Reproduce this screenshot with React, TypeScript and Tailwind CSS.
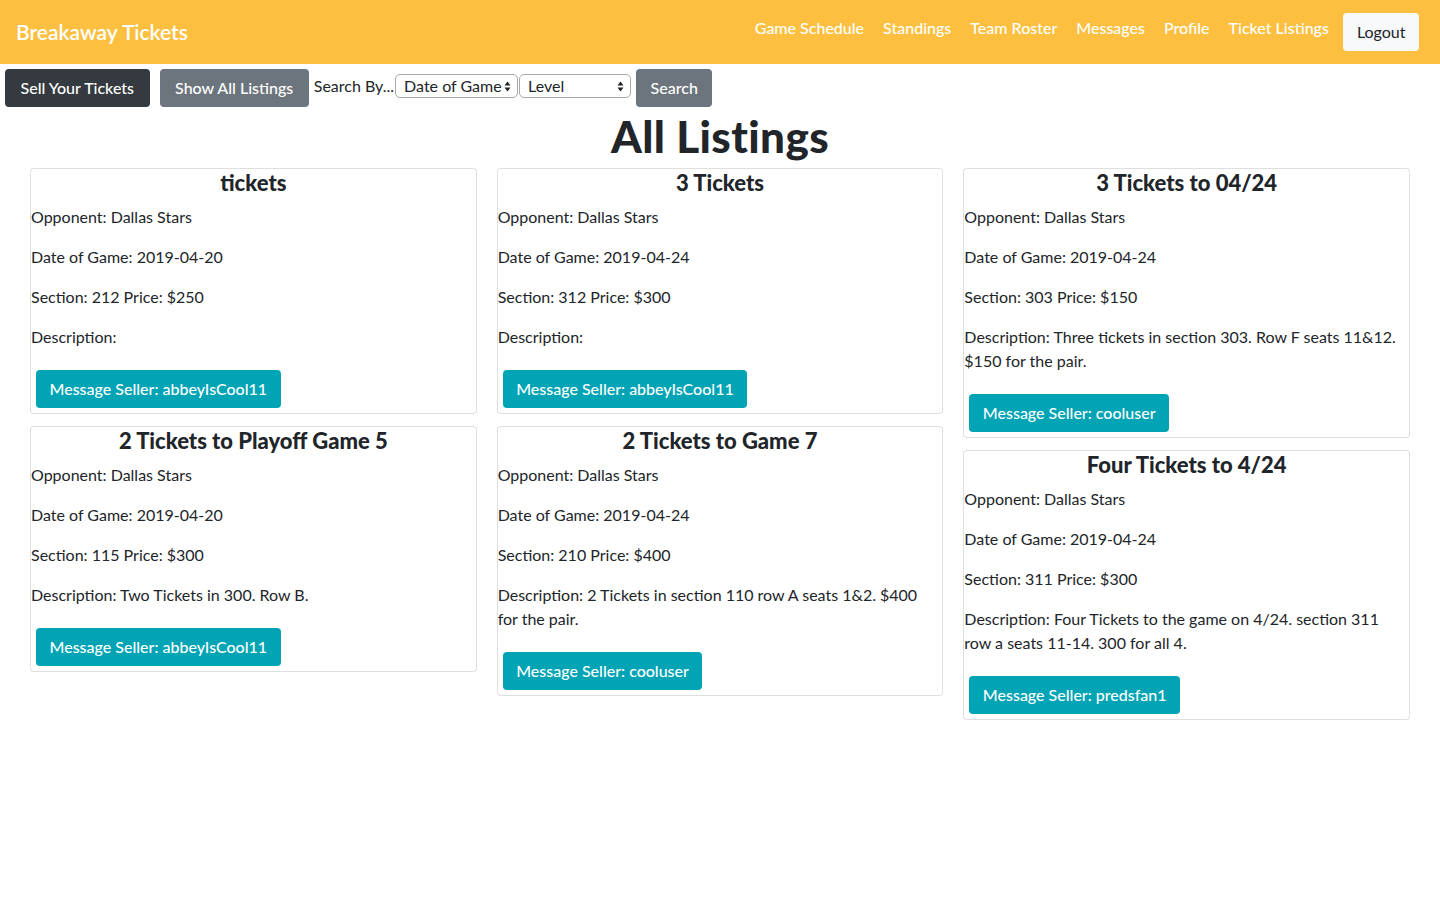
import React from "react";

type Listing = {
  title: string;
  date: string;
  section: string;
  price: string;
  description: string;
  seller: string;
};

// three columns, same order as on the page
const columns: Listing[][] = [
  [
    { title: "tickets", date: "2019-04-20", section: "212", price: "$250", description: "", seller: "abbeyIsCool11" },
    { title: "2 Tickets to Playoff Game 5", date: "2019-04-20", section: "115", price: "$300", description: "Two Tickets in 300. Row B.", seller: "abbeyIsCool11" },
  ],
  [
    { title: "3 Tickets", date: "2019-04-24", section: "312", price: "$300", description: "", seller: "abbeyIsCool11" },
    { title: "2 Tickets to Game 7", date: "2019-04-24", section: "210", price: "$400", description: "2 Tickets in section 110 row A seats 1&2. $400 for the pair.", seller: "cooluser" },
  ],
  [
    { title: "3 Tickets to 04/24", date: "2019-04-24", section: "303", price: "$150", description: "Three tickets in section 303. Row F seats 11&12. $150 for the pair.", seller: "cooluser" },
    { title: "Four Tickets to 4/24", date: "2019-04-24", section: "311", price: "$300", description: "Four Tickets to the game on 4/24. section 311 row a seats 11-14. 300 for all 4.", seller: "predsfan1" },
  ],
];

const navLinks = ["Game Schedule", "Standings", "Team Roster", "Messages", "Profile", "Ticket Listings"];

const Arrows: React.FC = () => (
  <svg width="7" height="11" viewBox="0 0 7 11" className="shrink-0">
    <path d="M3.5 0.5 L6.5 4.5 L0.5 4.5 Z" fill="#222" />
    <path d="M3.5 10.5 L6.5 6.5 L0.5 6.5 Z" fill="#222" />
  </svg>
);

const FakeSelect: React.FC<{ label: string; width: string }> = ({ label, width }) => (
  <div
    className={`${width} h-6 flex items-center justify-between pl-2 pr-1.5 border border-[#a9a9a9] rounded-[5px] bg-white text-[16px] leading-none`}
  >
    <span>{label}</span>
    <Arrows />
  </div>
);

const Card: React.FC<{ item: Listing }> = ({ item }) => (
  <div className="border border-[rgba(0,0,0,0.125)] rounded bg-white">
    <h4 className="text-center text-[22px] leading-[28px] font-black mb-2">{item.title}</h4>
    <p className="mb-4 leading-6">Opponent: Dallas Stars</p>
    <p className="mb-4 leading-6">Date of Game: {item.date}</p>
    <p className="mb-4 leading-6">
      Section: {item.section} Price: {item.price}
    </p>
    <p className="mb-4 leading-6 pr-2">Description: {item.description}</p>
    <button className="m-[5px] h-[38px] px-[13.5px] rounded bg-[#00a4b4] text-white font-medium text-[16px]">
      Message Seller: {item.seller}
    </button>
  </div>
);

export default function App() {
  return (
    <div className="min-h-screen bg-white text-[#212529] text-[16px]" style={{ fontFamily: "Lato, 'Open Sans', sans-serif" }}>
      {/* Navbar */}
      <nav className="h-16 bg-[#fdbf40] flex items-center justify-between pl-4 pr-[21px]">
        <div className="text-white text-[21px] font-semibold">Breakaway Tickets</div>
        <div className="flex items-center">
          <div className="flex -mt-2">
            {navLinks.map((l) => (
              <a key={l} className="px-[9.5px] text-white text-[16px] font-medium">
                {l}
              </a>
            ))}
          </div>
          <button className="ml-[5px] h-[38px] px-[13.5px] rounded bg-[#f8f9fa] text-[#212529] text-[16px]">Logout</button>
        </div>
      </nav>

      {/* Search row */}
      <div className="flex items-center">
        <button className="m-[5px] h-[38px] px-[15.5px] rounded bg-[#343a40] text-white font-medium">Sell Your Tickets</button>
        <button className="m-[5px] h-[38px] px-[15.5px] rounded bg-[#6c757d] text-white font-medium">Show All Listings</button>
        <span className="mr-px -mt-1">Search By...</span>
        <div className="flex gap-px -mt-1">
          <FakeSelect label="Date of Game" width="w-[123px]" />
          <FakeSelect label="Level" width="w-[112px]" />
        </div>
        <button className="m-[5px] h-[38px] px-[14.5px] rounded bg-[#6c757d] text-white font-medium">Search</button>
      </div>

      <h1 className="text-center text-[44px] leading-[48px] font-black tracking-[0.4px] mb-2">All Listings</h1>

      <div className="grid grid-cols-3 gap-x-5 px-[30px]">
        {columns.map((col, i) => (
          <div key={i} className="flex flex-col gap-3">
            {col.map((item) => (
              <Card key={item.title} item={item} />
            ))}
          </div>
        ))}
      </div>
    </div>
  );
}
